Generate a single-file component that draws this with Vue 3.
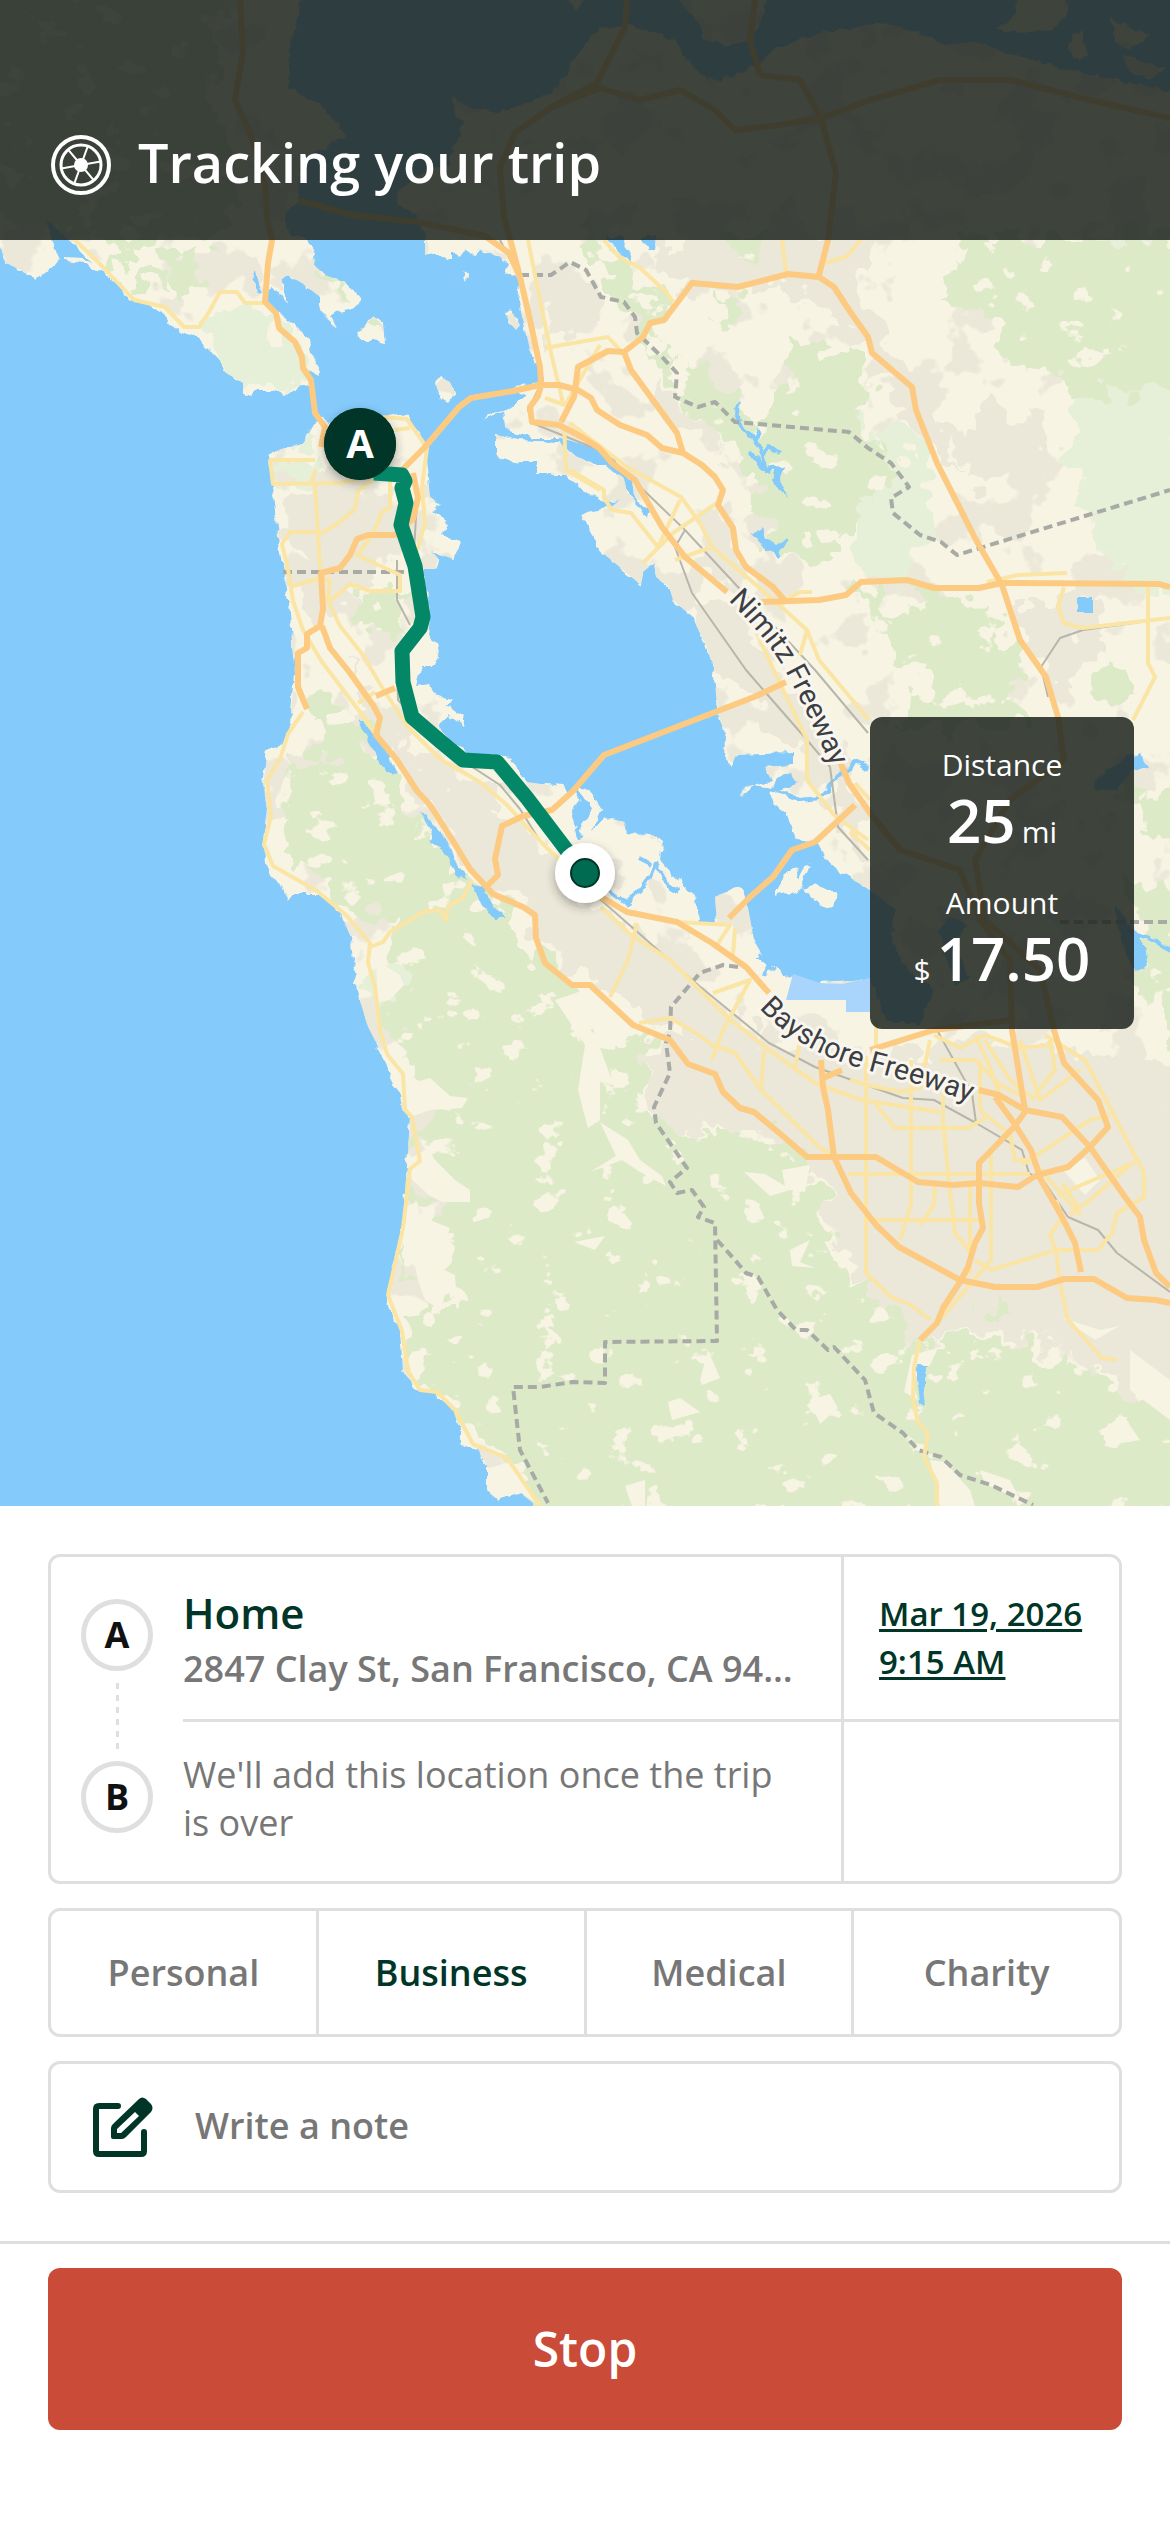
<template>
  <main class="trip">
    <section class="map-area" aria-label="Trip map">
      <svg class="map" viewBox="0 0 1170 1506" role="img" aria-label="Route from home">
        <defs>
          <filter id="ragged" x="0" y="0" width="1170" height="1506" filterUnits="userSpaceOnUse">
            <feTurbulence type="fractalNoise" baseFrequency="0.035" numOctaves="3" seed="4" />
            <feDisplacementMap in="SourceGraphic" scale="60" xChannelSelector="R" yChannelSelector="G" />
          </filter>
          <filter id="coast" x="0" y="0" width="1170" height="1506" filterUnits="userSpaceOnUse">
            <feTurbulence type="fractalNoise" baseFrequency="0.09" numOctaves="2" seed="9" />
            <feDisplacementMap in="SourceGraphic" scale="9" xChannelSelector="R" yChannelSelector="G" />
          </filter>
          <filter
            id="clearings"
            x="0"
            y="0"
            width="1170"
            height="1506"
            filterUnits="userSpaceOnUse"
            color-interpolation-filters="sRGB"
          >
            <feTurbulence type="fractalNoise" baseFrequency="0.03 0.038" numOctaves="4" seed="12" />
            <feColorMatrix values="0 0 0 0 0.97  0 0 0 0 0.955  0 0 0 0 0.89  0 26 0 0 -17" />
          </filter>
          <filter
            id="blocks"
            x="0"
            y="0"
            width="1170"
            height="1506"
            filterUnits="userSpaceOnUse"
            color-interpolation-filters="sRGB"
          >
            <feTurbulence type="fractalNoise" baseFrequency="0.02" numOctaves="4" seed="31" />
            <feColorMatrix values="0 0 0 0 0.92  0 0 0 0 0.905  0 0 0 0 0.85  0 20 0 0 -11.4" />
          </filter>
          <filter id="pin-shadow" x="-50%" y="-50%" width="200%" height="200%">
            <feDropShadow dx="0" dy="4" stdDeviation="5" flood-color="#333333" flood-opacity="0.4" />
          </filter>
          <clipPath id="land-clip">
            <path v-for="d in land" :key="d" :d="d" />
          </clipPath>
          <clipPath id="woods-clip">
            <path v-for="d in woods" :key="d" :d="d" />
          </clipPath>
          <path id="nimitz" d="M728 600 Q764 636 780 662 T832 768" />
          <path id="bayshore" d="M759 1008 C792 1043 828 1060 870 1071 S945 1092 985 1108" />
        </defs>

        <rect class="water" width="1170" height="1506" />
        <g filter="url(#coast)">
          <path v-for="d in land" :key="d" :d="d" class="land" />
        </g>
        <g clip-path="url(#land-clip)">
          <g filter="url(#ragged)">
            <path v-for="d in urban" :key="d" :d="d" class="urban" />
          </g>
          <rect width="1170" height="1506" filter="url(#blocks)" />
          <g filter="url(#ragged)">
            <path v-for="d in meadows" :key="d" :d="d" class="meadow" />
            <path v-for="d in woods" :key="d" :d="d" class="wood" />
          </g>
          <g clip-path="url(#woods-clip)">
            <rect width="1170" height="1506" filter="url(#clearings)" />
          </g>
        </g>
        <path v-for="d in clearings" :key="d" :d="d" class="land" />
        <path class="salt" d="M793 974 820 983 842 984 870 978V1012H846V1000H786Z" />
        <g filter="url(#coast)">
          <path v-for="d in lakes" :key="d" :d="d" class="water" />
          <path v-for="d in creeks" :key="d" :d="d" class="creek" />
        </g>

        <path v-for="d in borders" :key="d" :d="d" class="border" />
        <path v-for="d in rails" :key="d" :d="d" class="rail" />
        <path v-for="d in streets" :key="d" :d="d" class="street" />
        <path v-for="d in highways" :key="d" :d="d" class="highway" />

        <text class="road-name"><textPath href="#nimitz">Nimitz Freeway</textPath></text>
        <text class="road-name"><textPath href="#bayshore">Bayshore Freeway</textPath></text>

        <circle class="pin" cx="360" cy="444" r="36" filter="url(#pin-shadow)" />
        <path class="route" :d="route" />
        <circle class="pin" cx="360" cy="444" r="36" />
        <text class="pin-text" x="360" y="458" text-anchor="middle">A</text>

        <circle class="here-halo" cx="585" cy="873" r="30" filter="url(#pin-shadow)" />
        <circle class="here" cx="585" cy="873" r="14" />
      </svg>

      <header class="header">
        <svg class="wheel" viewBox="0 0 60 60" aria-hidden="true">
          <circle cx="30" cy="30" r="28" stroke-width="4" />
          <circle cx="30" cy="30" r="20" stroke-width="3" />
          <path
            v-for="angle in [10, 70, 130, 190, 250, 310]"
            :key="angle"
            d="M30 30H50"
            stroke-width="2"
            :transform="`rotate(${-angle} 30 30)`"
          />
          <circle class="hub" cx="30" cy="30" r="7" />
        </svg>
        <h1 class="title">Tracking your trip</h1>
      </header>

      <dl class="stats">
        <div class="stat">
          <dt>Distance</dt>
          <dd><strong>25</strong><span>mi</span></dd>
        </div>
        <div class="stat">
          <dt>Amount</dt>
          <dd><span>$</span><strong>17.50</strong></dd>
        </div>
      </dl>
    </section>

    <section class="details">
      <div class="card stops">
        <div class="rail-col" aria-hidden="true">
          <span class="badge">A</span>
          <span class="dots"></span>
          <span class="badge">B</span>
        </div>
        <div class="rows">
          <div class="row">
            <div class="place">
              <h2 class="place-name">Home</h2>
              <p class="address">2847 Clay St, San Francisco, CA 94...</p>
            </div>
            <div class="when">
              <a href="#">Mar 19, 2026<br />9:15 AM</a>
            </div>
          </div>
          <div class="row">
            <div class="place">
              <p class="pending">We'll add this location once the trip is over</p>
            </div>
            <div class="when"></div>
          </div>
        </div>
      </div>

      <div class="card purposes" role="radiogroup" aria-label="Trip purpose">
        <label
          v-for="item in purposes"
          :key="item"
          class="purpose"
          :class="{ active: item === purpose }"
        >
          <input v-model="purpose" type="radio" name="purpose" :value="item" />
          {{ item }}
        </label>
      </div>

      <label class="card note">
        <svg class="edit" viewBox="0 0 60 60" aria-hidden="true">
          <path class="edit-box" d="M25 9H6Q3 9 3 12V54Q3 57 6 57H48Q51 57 51 54V35" />
          <path
            fill-rule="evenodd"
            d="M18 40V31Q18 29 20 27L46 2Q49 -1 53 2L58 7Q61 11 58 15L33 40Q31 42 29 42H20Q18 42 18 40ZM24 36H28L46 19 42 15 24 32Z"
          />
        </svg>
        <input v-model="note" class="note-input" type="text" placeholder="Write a note" aria-label="Write a note" />
      </label>
    </section>

    <footer class="footer">
      <button class="stop" type="button">Stop</button>
    </footer>
  </main>
</template>

<script setup>
import { ref } from 'vue'

const purposes = ['Personal', 'Business', 'Medical', 'Charity']
const purpose = ref('Business')
const note = ref('')

const route =
  'M374 473 402 475 405 481 402 488 406 503 401 525 415 566 423 617 420 628 402 651 403 682 412 717 440 741 463 760 497 762 527 798 565 848 584 873'

const land = [
  // Marin
  'M-10 -10H304L290 50 288 88 320 105 346 135 325 148 300 160 298 200 283 215 285 230 306 240 316 252 314 265 325 275 346 283 360 300 354 308 337 313 331 317 337 328 325 318 320 308V297L302 283 287 275 281 280 287 303 276 290 270 287 267 303 281 315 295 327 310 340 312 353 320 370 318 375 308 370 310 385 297 387 285 395 268 390 256 390 249 397 243 392V383L226 373 222 363 212 353 207 345 191 335 182 333 168 323 163 313 143 303 128 298 119 283 98 270 84 263 63 261V258L84 259 94 263 76 247 45 217 52 240 57 255 56 263 44 272 36 279 21 270 6 263 0 247H-10Z',
  // San Francisco and the peninsula, south shore of the bay
  'M317 416 330 423 360 419 383 417 397 414 407 417 422 437 425 451 430 496 440 505 432 512 448 523 442 534 450 539 460 542 453 559 432 551 438 559 435 569H423L430 619 428 635 437 644 439 655 435 666H422L417 684 430 682 433 694 452 701 448 707 464 717 462 726 448 714 438 728 467 755H508L515 767 527 782 563 787 570 793 581 787 593 793 601 810 592 830 606 818 625 822 627 833 652 835 662 843 660 860 669 870 685 887 696 897 698 923H717L715 897 733 888 742 890 748 907 754 940 761 957 777 967 788 977 819 983 870 980 885 1020 920 1025 932 990 905 965 890 940 895 910 870 890 845 875 830 863 815 843 796 840 786 812 773 803 771 788 754 785 742 797 744 788 771 780 765 767 792 765V753L736 755 731 767 725 760 726 737 719 717 713 670 708 650 700 633 692 617 673 600 669 587 656 577 654 563 643 572 641 585 597 548 597 542 583 518 590 511 610 508 620 500 627 492 640 505 646 520 648 510 634 495 632 480 615 462 600 450 575 442 560 438 536 438 513 433 505 427 503 413 483 420 488 415 503 412 515 403 526 395 513 387 541 383 536 367 530 350 524 323 518 300 520 282 515 275 505 273 509 263 497 255 480 250 474 257 465 248 459 257 453 250V260L448 262 436 252 425 255V235L415 213 396 205 400 190 415 175 447 165 457 140 465 120 455 115 452 97 470 108 500 112 535 100 560 85 575 60 583 45 600 30 627 25 650 30 675 40 685 55 695 70 715 80 735 77 755 65 775 50 820 33 880 23 925 35 945 45 975 42 1030 60 1090 75 1180 93V1520H535L533 1503 520 1493 498 1500 487 1491V1465L477 1448 460 1444V1430L453 1410 433 1392 417 1390 403 1371 400 1331 387 1303V1291L402 1232 408 1153 410 1115 402 1110 400 1094 392 1078 382 1054 368 1027 357 991 352 940 340 912 320 894 293 894 288 901 282 887 268 869 263 841 267 809 263 784 267 759 262 751 268 746 278 748 289 734 292 701 294 673 290 612 280 551 272 487 269 457 277 450 303 444 312 428Z',
  // Alameda
  'M496 435 517 440 559 442 570 453 593 465 608 465 624 478 627 492 620 500 604 502 585 493 566 475H536V463H517L496 457Z',
  // islands
  'M373 317 383 325 385 342 373 340H360L356 333Z',
  'M436 385 442 378 450 382 455 393 448 402 440 397Z',
  'M505 312 512 310 515 318 520 325 516 330 509 322Z',
  'M461 272 467 276 466 280Z',
  'M675 -5 700 25 705 40 730 45 750 40 765 10 768 -5Z',
  'M565 -5H590L575 10Z',
  'M1010 20 1020 -5H1065L1068 15 1050 30 1020 33 995 28Z',
  'M1110 18 1148 35 1130 50 1115 42Z',
  'M1068 45 1080 30 1088 55 1075 60Z',
  'M1122 55 1165 70 1150 78 1130 72Z',
  // salt marsh banks
  'M774 896 786 873 812 862 800 890Z',
  'M803 888 815 884 838 895 835 908 815 902Z'
]

const urban = [
  'M285 490 340 485 400 500 410 540 350 600 310 620 290 560Z',
  'M345 660 375 690 400 745 440 770 500 800 550 860 600 905 690 980 760 1040 870 1060 1010 1040 1180 1070V1400L1100 1370 1050 1340 980 1330 920 1345 880 1310 835 1240 830 1190 780 1160 740 1130 660 1120 640 1060 690 1040 600 985 560 975 530 910 490 890 440 820 400 760Z',
  'M300 748 330 755 335 775 300 770Z',
  'M540 265 585 275 605 300 590 335 545 345Z',
  'M650 255 700 235H870L855 300 880 340 935 400 960 470 915 440 880 370 820 300 770 285 690 290Z',
  'M660 380 690 410 720 440 710 450 650 400Z',
  'M700 540 760 560 740 590 700 570Z',
  'M680 590 740 610 790 690 840 760 870 860 850 850 800 740 730 690Z',
  'M1000 600 1090 600 1100 650 1060 690 1020 640Z',
  'M980 400 1050 420 1040 460 960 480Z'
]

const meadows = [
  'M195 325 235 305 270 312 290 345 305 370 310 392 285 396 245 392 225 372Z',
  'M1080 385H1180V600L1110 570 1090 500 1060 460Z',
  'M1100 230H1180V300L1140 280Z',
  'M312 430 325 430 322 455 303 450Z',
  'M275 465H320V482H275Z',
  'M370 975 400 960 420 990 395 1030 380 1010Z',
  'M850 420 910 430 930 520 900 590 850 560Z'
]

const woods = [
  'M-10 -10H225L215 100 240 180 235 225 180 240 60 235 -10 200Z',
  'M165 250 191 258 204 290 180 300 161 278Z',
  'M130 283 153 272 168 294 140 292Z',
  'M107 238H130V270L115 277Z',
  'M320 272 350 284 358 298 345 300Z',
  'M373 318 383 326 380 335 362 333Z',
  'M363 591 403 600 400 640 385 632 360 625 350 600Z',
  // Santa Cruz mountains
  'M303 712 345 702 372 745 395 775 420 815 450 860 475 890 510 915 535 950 560 985 580 1010 600 1045 650 1035 640 1080 650 1115 700 1130 760 1130 795 1150 805 1185 830 1195 820 1225 850 1275 890 1310 920 1345 980 1335 1040 1345 1100 1375 1140 1400 1180 1410V1520H545L500 1455 470 1430 455 1400 418 1375 410 1320 452 1310 440 1230 445 1190 420 1140 440 1100 405 1060 385 1010 410 975 385 950 400 925 350 905 330 880 285 850 275 800 290 765 330 765Z',
  'M405 1185 435 1200 425 1215 405 1215Z',
  'M402 1245 418 1285 400 1275Z',
  // East Bay hills
  'M575 235 600 240 640 280 675 300 672 315 655 330 650 345 700 380 730 400 760 415 790 390 780 345 840 345 870 375 872 400 860 420 880 440 890 465 880 500 850 520 830 550 800 545 765 550 762 500 755 470 735 455 715 430 690 410 650 345 640 320 610 290Z',
  'M700 235H770L760 262 725 255Z',
  'M715 290 745 292 745 315 720 318Z',
  'M865 590 900 610 960 590 990 610 1010 650 1020 680 1030 730H900L920 680 890 650 870 620Z',
  'M960 235H1180V390L1090 400 1050 370 1000 360 990 310 935 300 965 275Z',
  'M1105 660 1125 665 1125 695 1100 690Z',
  'M1130 790H1180V840L1140 830Z',
  'M1130 880 1180 900V1060L1140 990Z',
  'M980 1305 1010 1312 1000 1325Z'
]

const clearings = [
  'M405 1085 430 1078 450 1096 468 1098 462 1108 430 1110 408 1118Z',
  'M406 1225 425 1218 450 1228 442 1250 440 1268 455 1275 456 1290 445 1295 440 1310 425 1300 418 1280Z',
  'M408 1160 428 1148 435 1160 455 1180 470 1190V1202H442L430 1196 412 1180Z',
  'M376 960 400 975 404 985 390 1000 378 1002Z',
  'M555 1000 590 988 630 1015 590 1030 615 1050 600 1048 612 1080 625 1088 600 1082 600 1120 588 1128 578 1090 585 1045Z',
  'M600 1122 628 1140 640 1160 662 1176 666 1186 640 1172 622 1160 590 1172 616 1156Z',
  'M574 1242 605 1236 595 1250Z',
  'M744 1172 765 1174 785 1186 782 1170 810 1165 805 1192 790 1190 770 1196Z',
  'M700 1380 708 1350 720 1378 702 1385Z',
  'M625 1486 645 1480 645 1506H632Z',
  'M810 1400 830 1394 838 1408 820 1424Z',
  'M668 1402 680 1398 700 1412 672 1420Z',
  'M790 1250 810 1240 800 1262 815 1268 792 1266Z',
  'M912 1355 938 1348 930 1365 912 1380 918 1400 904 1392Z',
  'M930 1460 945 1462 970 1490 975 1506H940Z',
  'M490 1468 510 1462 540 1506 520 1492 498 1498 490 1490Z',
  'M980 1470 1010 1480 1020 1500 985 1484Z',
  'M1130 1350 1170 1380V1420L1130 1390Z',
  'M1100 1430 1125 1418 1140 1440 1110 1445Z',
  'M1062 1318 1100 1330 1120 1326 1095 1340Z',
  'M1063 1170 1085 1158 1100 1180 1085 1195Z'
]

const lakes = [
  'M358 719 373 730 387 751 397 773 385 771 370 744Z',
  'M420 810 432 824 446 838 455 860 467 880 458 878 443 850 430 842 434 838Z',
  'M470 880 483 887 493 905 507 919 494 919 483 905Z',
  'M606 236H620L633 262 622 256Z',
  'M641 236H656L654 252 648 252Z',
  'M777 468 784 466 780 480 789 498 778 488 774 478Z',
  'M752 535 761 527 765 538 775 545 788 540 778 558 765 547Z',
  'M1077 598H1093V613H1077Z',
  'M1095 790 1100 775 1120 760 1140 752 1148 768 1130 770 1115 790Z',
  'M1115 905 1125 915 1134 930 1144 947 1148 967 1134 970 1122 945Z',
  'M870 910 890 905 895 930 880 940Z',
  'M940 930 950 915 965 925 955 945 970 980 955 985 945 960Z',
  'M916 1365H928L924 1375V1390L926 1405 920 1402Z',
  'M777 778 792 773 798 782 784 790 772 790Z',
  'M579 800 590 805 586 820 573 826 572 812Z'
]

const creeks = [
  'M740 403 735 413 742 427 754 437 761 457 766 470 780 468',
  'M761 430 756 440M748 450 765 470M762 456 768 446 780 453',
  'M771 788 800 800 820 798 840 775 855 762 868 768',
  'M655 863 648 880 640 892 625 902M655 863 668 885 680 892M638 858 650 864M630 905 610 890',
  'M820 872 805 860 796 878',
  'M252 277 262 292M255 272 258 285',
  'M575 790 590 810 575 830 582 838',
  'M1134 935 1155 940 1170 950',
  'M757 955 775 970M770 962 765 975'
]

const borders = [
  'M520 275 551 275 570 262 586 270 601 297 624 302 635 317 637 333 662 357 677 373 675 397 698 407 715 402 735 422 849 432 868 448 891 463 909 487 891 498 893 513 920 535 941 542 957 555 1170 490',
  'M283 572H405',
  'M738 967 723 965 700 973 671 1007 670 1033 666 1043 670 1073 654 1107 656 1123 687 1168 670 1182 677 1193 692 1190 704 1207 698 1217 715 1223 717 1341 605 1342V1383L573 1382 540 1387H513L520 1450 548 1503',
  'M717 1240 735 1260 746 1273 758 1277 777 1310 796 1330 807 1330 828 1350 834 1347 865 1380 874 1413 903 1433 918 1450 941 1457 960 1475 991 1485 1033 1505',
  'M1060 922H1170'
]

const rails = [
  'M500 240 522 283 534 340 543 380 528 410 532 423 604 452 685 530 738 587 815 670 868 733',
  'M685 530 675 547 692 593 746 670 807 740 830 767 838 827 868 860',
  'M413 473 417 500 414 551',
  'M397 560 397 600 410 625M396 650 398 700 440 746 500 785 520 809 540 841 601 900 692 980 769 1043 815 1067 903 1098 934 1100 976 1123 1022 1150 1029 1173 1045 1183 1068 1217 1098 1230 1117 1253 1170 1292',
  'M937 1030 972 1093 976 1123',
  'M1170 618 1083 630 1060 638 1041 667 1048 697'
]

const streets = [
  // coast
  'M303 712 288 734 280 759 267 780 271 816 264 844 273 866 317 891 347 916 370 943 368 963 375 987 380 1030 387 1054 403 1074 405 1110 412 1117 420 1161 410 1169 403 1228 388 1295 402 1331 408 1371 420 1390 437 1392 455 1410 473 1444 507 1458 540 1506',
  'M370 947 383 942 390 932 423 912 440 910 446 920 448 906 463 898 472 880',
  'M75 240 99 263 134 300 165 307 184 327 199 327 209 312 220 292 237 292 245 303 264 303',
  // San Francisco
  'M270 460H315M270 460 273 484 340 483 400 470M310 485 316 470M315 484 318 534 320 569',
  'M320 534 340 522 355 509 358 491 372 480M318 532H290L282 544 288 569 293 601 303 630 322 662 360 712 376 735',
  'M390 470V508L382 512 373 534 357 555 400 575V591H370L350 584 330 601M330 580 328 601 340 626 363 655 380 684 407 726 440 759 480 782 507 805 540 841 600 900',
  'M383 417 407 419 427 448 422 487 425 523 417 551M395 430 410 428M290 587 320 578 330 580',
  'M358 703 375 692',
  // Peninsula
  'M601 907 631 935 670 960 727 1017 769 1050 815 1083 861 1100 940 1112',
  'M637 923 628 960 610 997M677 922 730 925 717 945M735 928 733 955',
  'M713 993 750 980 723 1030 712 1060M639 1023 670 1018 696 1033 712 1045 735 1053 761 1090 819 1147 834 1157M764 1050 761 1090',
  'M800 1040 795 1068M876 1048V1020',
  // South Bay
  'M866 1056V1273L891 1297 911 1305 930 1320M911 1060V1205L900 1240M943 1084V1120L949 1183 955 1233 970 1252M970 1183V1275M991 1150V1260L937 1323',
  'M848 1174H1030M868 1220H980M876 1105 895 1128H968L985 1118M920 1225 934 1205 935 1185',
  'M940 1083 900 1092 868 1085 850 1080M930 1040 925 1065 900 1080',
  'M975 1260 991 1270 1056 1250H1098L1112 1233 1117 1213 1144 1197V1173L1106 1100 1085 1060 1045 1035',
  'M1056 1250 1050 1235 1062 1217 1056 1200M1056 1250 1060 1283 1068 1320 1102 1358 1117 1360',
  'M1022 1165 1090 1120 1110 1115M1032 1160 1080 1215M1058 1195 1140 1160M1070 1215 1090 1200 1130 1165M1062 1183 1080 1210',
  'M934 1035 960 1048 985 1035 1020 1048 1050 1045M975 1035 988 1062 1005 1110M985 1040 1010 1080 1035 1100M940 1060 975 1060 1000 1085 1020 1095M980 1060V1110L1010 1135 1015 1160H1030M1020 1040 1040 1100 1080 1070M1050 1040 1055 1070 1035 1095',
  'M920 1340 914 1367 913 1400 918 1423 928 1433 924 1457 937 1483V1506',
  // East Bay
  'M528 240 540 300 551 353 563 403M545 348 608 337 620 350M570 423 627 467 681 497 700 523 712 547 777 603 807 630 819 660 869 720',
  'M545 398 565 405 600 345M564 425 566 470 600 490',
  'M717 503 673 533 643 563M570 470 604 490 604 498 612 510 631 513 658 547M658 547 680 500M675 560 712 547',
  'M754 627 777 677 807 740 807 780 834 815 868 840M807 630 800 655M786 600 800 592 812 592',
  'M604 240 620 258 639 267 666 292 673 302M782 240 786 273M861 240 846 257 824 263',
  'M1064 587 1058 607 1064 623 1083 628 1170 618M1148 587V663L1155 677 1133 720M987 582 1018 575 1067 573',
  'M855 783 870 800M850 832 870 850'
]

const highways = [
  'M240 0 243 50 235 100 250 133 265 183 267 217 272 240 268 263 265 302 276 313 279 328 295 342 302 357 303 368 311 380 315 413 325 427 321 447',
  'M402 470 425 447 459 407 471 398 513 391 540 385H559L578 390 591 398 597 410 620 425 647 435 662 448 683 453 702 465 715 477 723 490 718 505 733 528 736 550 746 567 773 587 786 602',
  'M627 0 625 27 597 83 552 107 515 133 500 167 504 217 513 250 520 277',
  'M298 200 351 215 418 222 485 236 509 253 520 277 530 320 540 367 541 383',
  'M541 386 538 396 530 407 532 422 559 425 582 437 599 448 612 463 635 480 662 527 685 557 727 592',
  'M838 757 849 783 870 813 900 850 960 870 980 920 1010 960 1012 1030 1025 1110',
  'M561 422 574 397 578 367 608 351 624 352 643 337 650 323 664 320 677 303 692 283 738 287 788 274 819 277 834 287 849 310 868 337 872 353 912 387 916 410 937 463 976 540 1002 585 1020 640 1046 677 1058 717 1064 760 1010 800 975 860 985 920 1040 970 1054 1030 1064 1063 1098 1100 1108 1127 1090 1147 1068 1167 1037 1175 1018 1187 979 1183 953 1185 918 1182 876 1157H807L784 1137 754 1112 740 1108 723 1092 715 1074 688 1064 670 1040 633 1025 590 985H572L545 963 536 938 535 915 523 907 493 894 470 869 453 841 430 805 417 791 397 760 376 735 380 718 373 705 350 673 330 648 322 626',
  'M819 275 828 240 836 173 825 133 821 118 870 100 940 80 1010 80 1090 100 1170 118M821 118 800 80 760 75M821 118 780 125 735 130 715 110 680 90 640 100 600 88 552 107M760 75 750 40 755 0',
  'M624 352 631 370 677 433 683 453',
  'M761 602 819 600 846 595 861 582 907 580 934 588H979L1002 583 1159 584 1170 587',
  'M786 682 754 697 604 755 573 791 552 810 523 816 502 826 495 859 498 875 488 885',
  'M307 709 298 687V653L307 648V634L320 626 323 609 321 573 340 568 350 555 357 539 368 535H395L413 519 418 498 413 473',
  'M376 696 395 688',
  'M601 897 627 912 677 922 712 943 746 967 769 993',
  'M979 1090 999 1095 1025 1110 1062 1117 1090 1147 1125 1197 1140 1217 1144 1240 1156 1273 1170 1287',
  'M729 918 750 897 773 877 792 850 815 842 855 805',
  'M821 1060 823 1087 828 1110 834 1157 851 1193 876 1225 899 1247 960 1280 995 1287H1037L1064 1279H1094L1127 1298 1156 1300 1170 1303',
  'M823 1078 842 1070M870 1050 934 1030 1010 1020',
  'M1025 1112 1014 1127 979 1163V1203L983 1228 975 1243 968 1267 960 1282 943 1308 937 1323 920 1340',
  'M995 1097 1014 1123 1031 1150 1041 1180 1062 1217 1075 1243 1081 1272'
]
</script>

<style>
body {
  margin: 0;
  background: #ffffff;
}
</style>

<style scoped>
.trip {
  font-family: 'Open Sans', 'Noto Sans', sans-serif;
  color: #777777;
  background: #ffffff;
}
.map-area {
  position: relative;
  overflow: hidden;
}
.map {
  display: block;
  width: 100%;
  height: auto;
}
.water {
  fill: #84cafa;
}
.land {
  fill: #f8f4e4;
}
.urban {
  fill: #ebe7d9;
}
.meadow {
  fill: #e6efd8;
}
.wood {
  fill: #dceac8;
}
.salt {
  fill: #a9d4fb;
}
.border,
.rail,
.street,
.highway,
.creek,
.route {
  fill: none;
  stroke-linejoin: round;
}
.creek {
  stroke: #84cafa;
  stroke-width: 4;
}
.border {
  stroke: #a8aaa6;
  stroke-width: 4;
  stroke-dasharray: 9 5;
}
.rail {
  stroke: #b8b5ab;
  stroke-width: 2;
}
.street {
  stroke: #fae5a4;
  stroke-width: 4;
}
.highway {
  stroke: #fdca82;
  stroke-width: 6;
}
.road-name {
  font: 400 29px Roboto, sans-serif;
  fill: #3c3e43;
  stroke: #f8f6ee;
  stroke-width: 6;
  stroke-linejoin: round;
  paint-order: stroke;
}
.route {
  stroke: #038766;
  stroke-width: 15;
}
.pin {
  fill: #003527;
}
.pin-text {
  font-size: 40px;
  font-weight: 700;
  fill: #ffffff;
}
.here-halo {
  fill: #ffffff;
}
.here {
  fill: #006b50;
  stroke: #003527;
  stroke-width: 2;
}

.header {
  position: absolute;
  top: 0;
  left: 0;
  right: 0;
  display: flex;
  align-items: flex-end;
  gap: 27px;
  padding: 129px 51px 45px;
  background: rgba(32, 37, 33, 0.86);
}
.wheel {
  width: 60px;
  height: 60px;
  fill: none;
  stroke: #ffffff;
}
.hub {
  fill: #ffffff;
  stroke: none;
}
.title {
  margin: 0;
  font-size: 54px;
  font-weight: 600;
  line-height: 66px;
  color: #ffffff;
}

.stats {
  position: absolute;
  right: 36px;
  bottom: 477px;
  box-sizing: border-box;
  width: 264px;
  display: flex;
  flex-direction: column;
  gap: 28px;
  margin: 0;
  padding: 27px 0 37px;
  border-radius: 12px;
  color: #ffffff;
  background: rgba(32, 37, 33, 0.86);
}
.stat {
  text-align: center;
  font-size: 30px;
  line-height: 42px;
}
.stat dd {
  display: flex;
  justify-content: center;
  align-items: baseline;
  gap: 6px;
  margin: 0;
}
.stat strong {
  font-size: 60px;
  font-weight: 600;
  line-height: 68px;
}

.details {
  display: flex;
  flex-direction: column;
  gap: 24px;
  padding: 48px;
}
.card {
  border: 3px solid #dfdfdf;
  border-radius: 12px;
}
.stops {
  display: flex;
}
.rail-col {
  flex: none;
  width: 132px;
  display: flex;
  flex-direction: column;
  align-items: center;
  gap: 12px;
  padding-top: 42px;
}
.badge {
  box-sizing: border-box;
  width: 72px;
  height: 72px;
  border: 5px solid #dfdfdf;
  border-radius: 50%;
  font-size: 36px;
  font-weight: 700;
  line-height: 62px;
  text-align: center;
  color: #111111;
}
.dots {
  width: 3px;
  height: 66px;
  background: repeating-linear-gradient(#dfdfdf 0 6px, transparent 6px 12px);
}
.rows {
  flex: 1;
  min-width: 0;
}
.row {
  display: flex;
}
.row + .row {
  border-top: 3px solid #dfdfdf;
}
.place {
  flex: 1;
  min-width: 0;
  padding: 24px 36px 26px 0;
}
.row + .row .place {
  padding: 29px 36px 34px 0;
}
.place-name {
  margin: 0;
  font-size: 42px;
  font-weight: 600;
  line-height: 64px;
  color: #003527;
}
.address,
.pending {
  margin: 0;
  font-size: 36px;
  line-height: 48px;
}
.address {
  font-weight: 600;
  white-space: nowrap;
  overflow: hidden;
  text-overflow: ellipsis;
}
.when {
  box-sizing: border-box;
  flex: none;
  width: 278px;
  padding: 33px 0 0 35px;
  border-left: 3px solid #dfdfdf;
}
.when a {
  font-size: 33px;
  font-weight: 600;
  line-height: 48px;
  color: #003527;
  text-decoration-thickness: 3px;
  text-underline-offset: 3px;
}

.purposes {
  display: flex;
  overflow: hidden;
}
.purpose {
  position: relative;
  flex: 1;
  padding: 38px 0 37px;
  font-size: 36px;
  font-weight: 600;
  line-height: 48px;
  text-align: center;
  cursor: pointer;
}
.purpose + .purpose {
  border-left: 3px solid #dfdfdf;
}
.purpose input {
  position: absolute;
  inset: 0;
  margin: 0;
  opacity: 0;
}
.purpose.active {
  color: #003527;
}

.note {
  display: flex;
  align-items: center;
  gap: 42px;
  padding: 33px 42px;
}
.edit {
  flex: none;
  width: 60px;
  height: 60px;
  overflow: visible;
  fill: #003527;
}
.edit-box {
  fill: none;
  stroke: #003527;
  stroke-width: 6;
  stroke-linecap: round;
}
.note-input {
  flex: 1;
  min-width: 0;
  height: 60px;
  padding: 0 0 4px;
  border: 0;
  outline: 0;
  box-sizing: border-box;
  font: 600 36px 'Open Sans', 'Noto Sans', sans-serif;
  color: #003527;
  background: none;
}
.note-input::placeholder {
  color: #777777;
  opacity: 1;
}

.footer {
  padding: 24px 48px 102px;
  border-top: 3px solid #dfdfdf;
}
.stop {
  display: block;
  width: 100%;
  padding: 48px 0;
  border: 0;
  border-radius: 12px;
  font: 600 48px 'Open Sans', 'Noto Sans', sans-serif;
  line-height: 66px;
  color: #ffffff;
  background: #c94b38;
  cursor: pointer;
}
</style>
